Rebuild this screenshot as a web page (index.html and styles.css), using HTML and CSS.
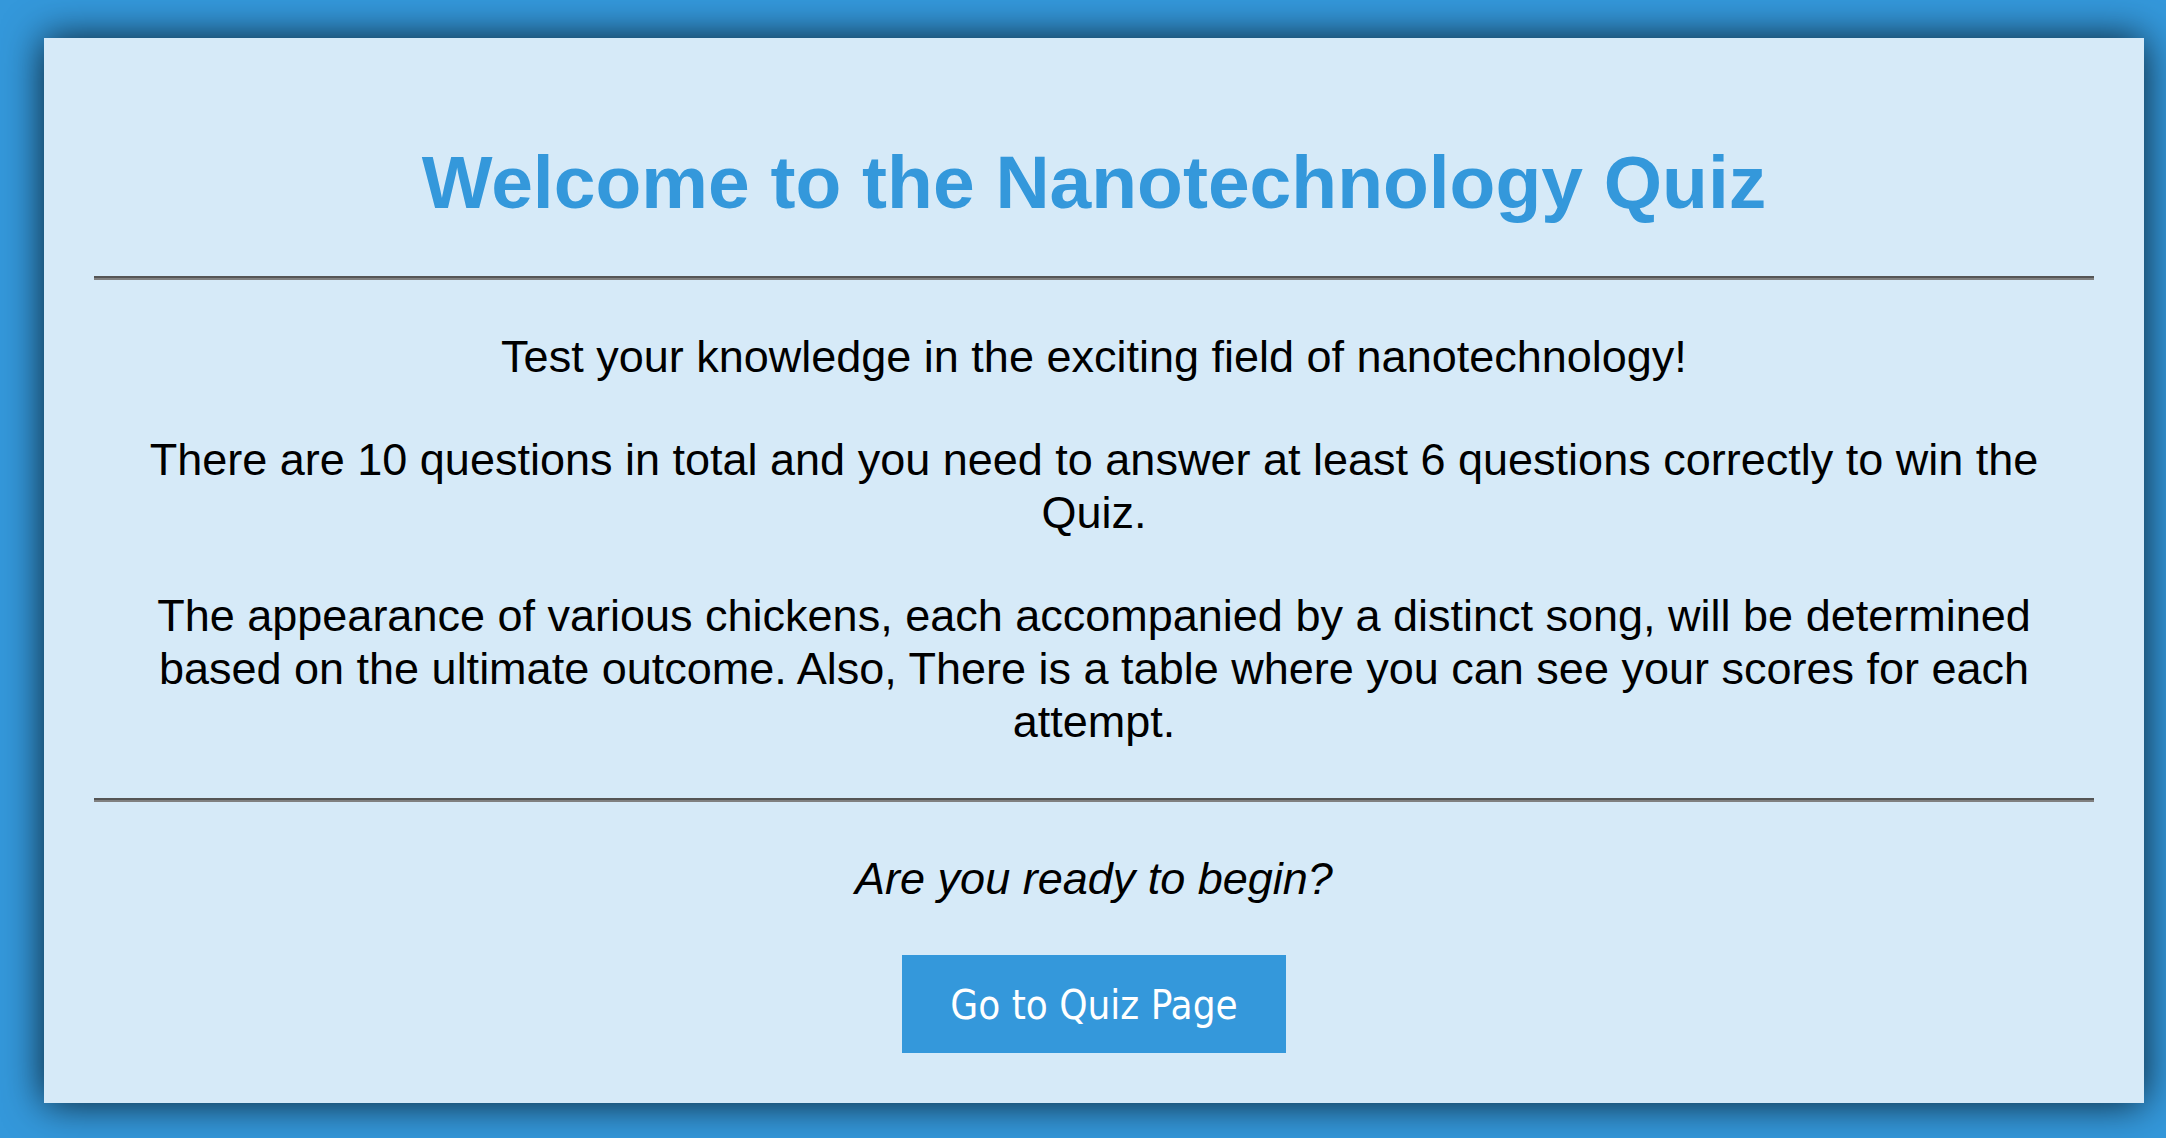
FILE: index.html
```html
<!DOCTYPE html>
<html lang="en">
<head>
  <meta charset="utf-8">
  <meta name="viewport" content="width=device-width, initial-scale=1">
  <title>Nanotechnology Quiz</title>
  <link rel="stylesheet" href="styles.css">
</head>
<body>
  <main class="card">
    <h1 class="title">Welcome to the Nanotechnology Quiz</h1>
    <hr class="rule">
    <p class="text">Test your knowledge in the exciting field of nanotechnology!</p>
    <p class="text">There are 10 questions in total and you need to answer at least 6 questions correctly to win the Quiz.</p>
    <p class="text">The appearance of various chickens, each accompanied by a distinct song, will be determined based on the ultimate outcome. Also, There is a table where you can see your scores for each attempt.</p>
    <hr class="rule">
    <p class="text"><em>Are you ready to begin?</em></p>
    <button class="start" type="button">Go to Quiz Page</button>
  </main>
</body>
</html>
```

FILE: styles.css
```css
* {
  box-sizing: border-box;
}

body {
  margin: 0;
  padding: 38px 22px 35px 44px;
  background: #3498db;
  color: #000;
  font-family: Arial, "Liberation Sans", sans-serif;
}

.card {
  display: flex;
  flex-direction: column;
  align-items: center;
  gap: 50px;
  padding: 100px 50px 50px;
  background: #d6eaf8;
  box-shadow: 0 0 38px rgba(0, 0, 0, 0.8);
  text-align: center;
}

.title {
  margin: 0;
  color: #3498db;
  font-size: 75px;
  line-height: 88px;
}

.rule {
  align-self: stretch;
  margin: 0;
  border: 0;
  border-top: 2px solid #555;
  border-bottom: 2px solid #808080;
}

.text {
  margin: 0;
  padding: 0 20px;
  font-size: 45px;
  line-height: 53px;
}

.start {
  padding: 26px 48px 24px;
  border: 0;
  background: #3498db;
  color: #fff;
  font-family: Tahoma, "DejaVu Sans Condensed", sans-serif;
  font-size: 40px;
  line-height: 48px;
  cursor: pointer;
}
```
